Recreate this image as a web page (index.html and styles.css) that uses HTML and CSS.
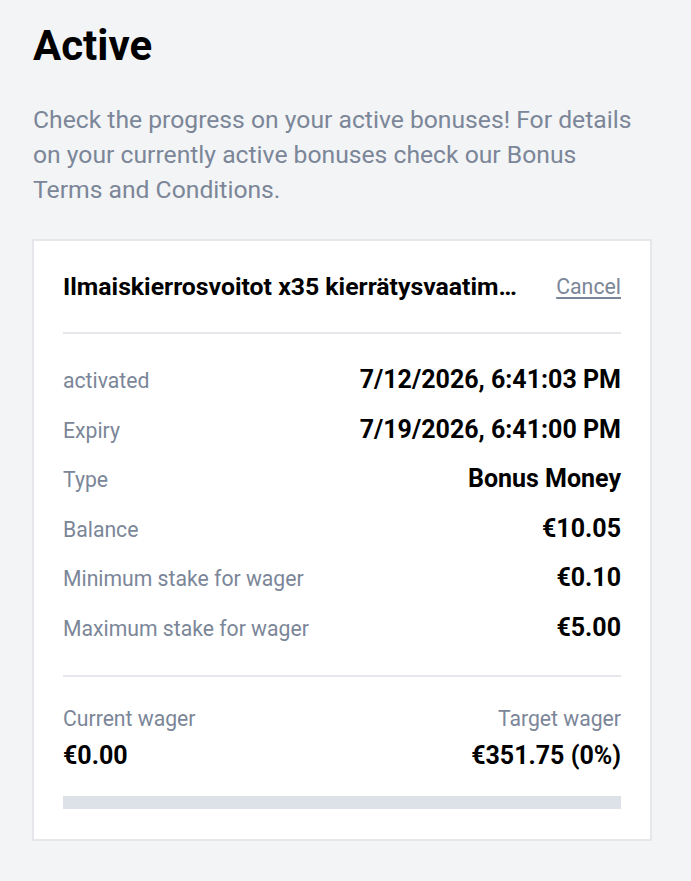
FILE: index.html
```html
<!DOCTYPE html>
<html lang="en">

<head>
  <meta charset="UTF-8">
  <meta name="viewport" content="width=device-width, initial-scale=1.0">
  <title>Active bonuses</title>
  <link rel="stylesheet" href="styles.css">
</head>

<body>
  <div class="page">
    <h1 class="title">Active</h1>
    <p class="intro">Check the progress on your active bonuses! For details on your currently active bonuses check our Bonus Terms and Conditions.</p>

    <div class="card">
      <div class="card-head">
        <div class="bonus-name">Ilmaiskierrosvoitot x35 kierrätysvaatimuksella</div>
        <a href="#" class="cancel">Cancel</a>
      </div>

      <div class="details">
        <div class="row"><span class="label">activated</span><span class="value">7/12/2026, 6:41:03 PM</span></div>
        <div class="row"><span class="label">Expiry</span><span class="value">7/19/2026, 6:41:00 PM</span></div>
        <div class="row"><span class="label">Type</span><span class="value">Bonus Money</span></div>
        <div class="row"><span class="label">Balance</span><span class="value">€10.05</span></div>
        <div class="row"><span class="label">Minimum stake for wager</span><span class="value">€0.10</span></div>
        <div class="row"><span class="label">Maximum stake for wager</span><span class="value">€5.00</span></div>
      </div>

      <div class="wager">
        <div class="wager-col">
          <span class="label">Current wager</span>
          <span class="wager-value">€0.00</span>
        </div>
        <div class="wager-col right">
          <span class="label">Target wager</span>
          <span class="wager-value">€351.75 (0%)</span>
        </div>
      </div>

      <div class="progress">
        <div class="progress-fill" style="width: 0%"></div>
      </div>
    </div>
  </div>
</body>

</html>
```

FILE: styles.css
```css
body {
  margin: 0;
  background: #f3f4f6;
  font-family: Roboto, 'Liberation Sans', sans-serif;
  color: #000;
}

.page {
  padding: 22px 32px 40px 32px;
}

.title {
  margin: 0 0 0 1px;
  font-size: 42px;
  font-weight: 700;
  line-height: 48px;
}

.intro {
  max-width: 610px;
  margin: 32px 0 32px 1px;
  font-size: 24.7px;
  line-height: 35px;
  color: #7b8698;
}

.card {
  background: #fff;
  border: 2px solid #e5e7eb;
  padding: 32px 29px 30px 29px;
  width: 558px;
}

.card-head {
  display: flex;
  justify-content: space-between;
  align-items: center;
  gap: 34px;
  height: 28px;
  padding-bottom: 31px;
  border-bottom: 2px solid #e5e7eb;
}

.bonus-name {
  font-size: 24.8px;
  font-weight: 700;
  line-height: 28px;
  white-space: nowrap;
  overflow: hidden;
  text-overflow: ellipsis;
}

.cancel {
  flex-shrink: 0;
  color: #7b8698;
  font-size: 21.3px;
  line-height: 28px;
  text-decoration: underline;
  text-underline-offset: 3px;
}

.details {
  padding: 21px 0 22px;
  border-bottom: 2px solid #e5e7eb;
}

.row {
  display: flex;
  justify-content: space-between;
  align-items: baseline;
  height: 49.6px;
  line-height: 49.6px;
}

.label {
  color: #7b8698;
  font-size: 21.2px;
  line-height: 25px;
}

.row .label {
  line-height: 49.6px;
}

.value {
  font-size: 25px;
  font-weight: 700;
}

.wager {
  display: flex;
  justify-content: space-between;
  padding-top: 29px;
}

.wager-col {
  display: flex;
  flex-direction: column;
  gap: 10px;
}

.wager-col.right {
  align-items: flex-end;
}

.wager-value {
  font-size: 25px;
  font-weight: 700;
  line-height: 30px;
}

.progress {
  margin-top: 25px;
  height: 13px;
  background: #dde1e8;
}

.progress-fill {
  height: 100%;
  background: #22c55e;
}
```
